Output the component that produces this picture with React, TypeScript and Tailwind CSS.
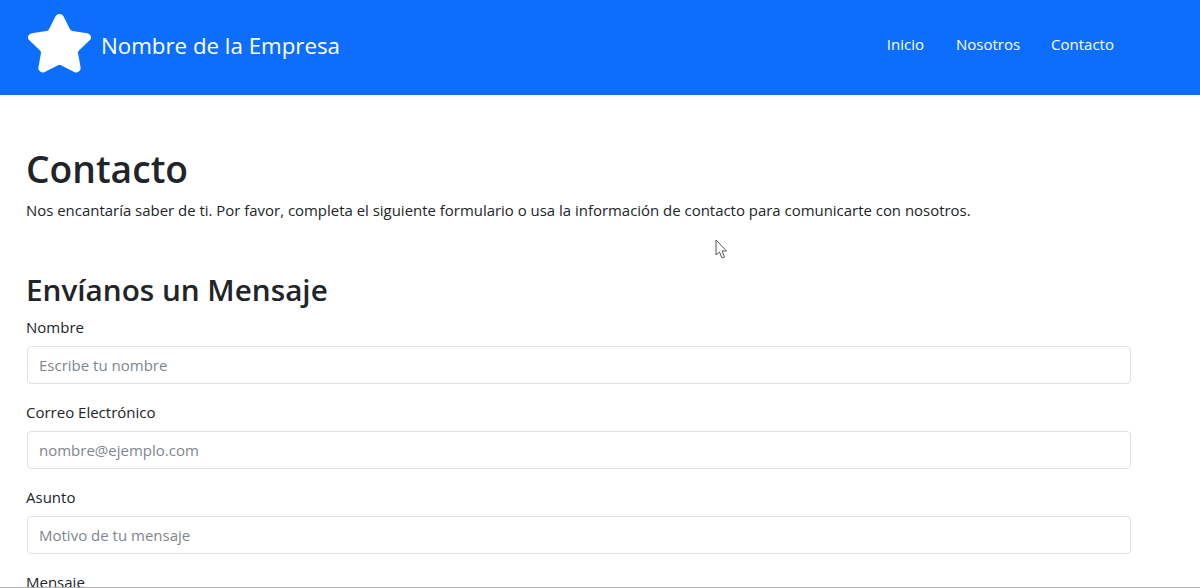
const FONT = "font-['Open_Sans',sans-serif]";

const FIELDS = [
  { label: 'Nombre', placeholder: 'Escribe tu nombre' },
  { label: 'Correo Electrónico', placeholder: 'nombre@ejemplo.com' },
  { label: 'Asunto', placeholder: 'Motivo de tu mensaje' },
];

function StarLogo() {
  return (
    <svg className="ml-px mb-[3px]" width="63" height="61" viewBox="1 1 22 22" fill="#fff" stroke="#fff" strokeWidth="2" strokeLinejoin="round" preserveAspectRatio="none">
      <path d="M11.525 2.295a.53.53 0 0 1 .95 0l2.31 4.679a2.123 2.123 0 0 0 1.595 1.16l5.166.756a.53.53 0 0 1 .294.904l-3.736 3.638a2.123 2.123 0 0 0-.611 1.878l.882 5.14a.53.53 0 0 1-.771.56l-4.618-2.428a2.122 2.122 0 0 0-1.973 0L6.396 21.01a.53.53 0 0 1-.77-.56l.881-5.139a2.122 2.122 0 0 0-.611-1.879L2.16 9.795a.53.53 0 0 1 .294-.906l5.165-.755a2.122 2.122 0 0 0 1.597-1.16z" />
    </svg>
  );
}

function Cursor() {
  return (
    <svg className="absolute left-[715px] top-[239px]" width="13" height="20" viewBox="0 0 13 20" fill="#fff" stroke="#555" strokeWidth="1">
      <path d="M1 1v15l3.5-3 2.5 6 2.5-1-2.5-6h4.500z" />
    </svg>
  );
}

export default function App() {
  return (
    <div className={`relative h-[588px] overflow-hidden bg-white text-[#212529] ${FONT}`}>
      <nav className="flex h-[95px] items-center justify-between bg-[#0d6efd] pb-[3px] pl-[27px] pr-[86px] text-white">
        <div className="flex items-center gap-[10px]">
          <StarLogo />
          <span className="text-[22.3px]">Nombre de la Empresa</span>
        </div>
        <div className="flex gap-[31px] text-[15px] mb-[3px]">
          <span className="mr-px">Inicio</span>
          <span>Nosotros</span>
          <span>Contacto</span>
        </div>
      </nav>

      <main className="w-[1131px] pl-[26px] pt-[50px]">
        <h1 className="text-[37.2px] leading-[48px] font-semibold">Contacto</h1>
        <p className="mt-[5px] text-[14.94px] leading-6">
          Nos encantaría saber de ti. Por favor, completa el siguiente formulario o usa la información de contacto para comunicarte con nosotros.
        </p>

        <h2 className="mt-[49px] text-[29.7px] leading-[38px] font-semibold">Envíanos un Mensaje</h2>
        <form className="mt-[6px] flex flex-col gap-4">
          {FIELDS.map((f) => (
            <div key={f.label}>
              <label className="mb-[7px] block text-[15px] leading-6">{f.label}</label>
              <input
                readOnly
                placeholder={f.placeholder}
                className="ml-px block h-[38px] w-[calc(100%-1px)] rounded-[4px] border border-[#dee2e6] pl-[11px] pr-3 text-[15px] placeholder:text-[#7d868e] outline-none"
              />
            </div>
          ))}
          <label className="block text-[15px] leading-6">Mensaje</label>
        </form>
      </main>

      <Cursor />
      <div className="absolute inset-x-0 bottom-0 h-px bg-[#b0b0b0]" />
    </div>
  );
}
